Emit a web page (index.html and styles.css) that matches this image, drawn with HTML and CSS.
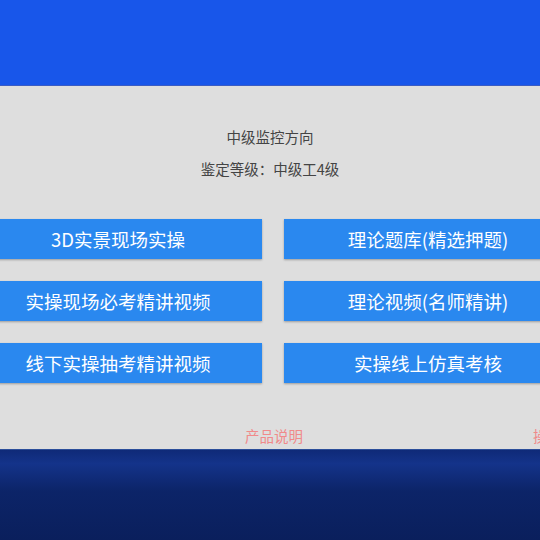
FILE: index.html
```html
<!DOCTYPE html>
<html lang="zh-CN">
<head>
<meta charset="utf-8">
<link rel="stylesheet" href="styles.css">
</head>
<body>
<div class="page">
  <div class="header"></div>
  <div class="main">
    <div class="title">中级监控方向</div>
    <div class="subtitle">鉴定等级：中级工4级</div>
    <div class="grid">
      <div class="btn">3D实景现场实操</div>
      <div class="btn">理论题库(精选押题)</div>
      <div class="btn">实操现场必考精讲视频</div>
      <div class="btn">理论视频(名师精讲)</div>
      <div class="btn">线下实操抽考精讲视频</div>
      <div class="btn">实操线上仿真考核</div>
    </div>
    <div class="links">
      <span class="link">产品说明</span>
      <span class="link">操作说明</span>
    </div>
  </div>
  <div class="bottom"></div>
</div>
</body>
</html>
```

FILE: styles.css
```css
html, body {
  margin: 0;
  padding: 0;
}
body {
  width: 540px;
  height: 540px;
  overflow: hidden;
  font-family: "Noto Sans CJK SC", "Noto Sans", sans-serif;
  background: #dedede;
}
.page {
  width: 540px;
  overflow: hidden;
}
.header {
  height: 85px;
  background: #1856ea;
  border-bottom: 1px solid #3a5cc4;
}
.main {
  height: 363px;
  background: #dedede;
  padding-top: 41px;
  box-sizing: border-box;
  display: flex;
  flex-direction: column;
  align-items: stretch;
}
.title, .subtitle {
  text-align: center;
  font-size: 14.5px;
  line-height: 20px;
  color: #444;
}
.subtitle {
  margin-top: 12px;
}
.grid {
  margin-top: 40px;
  margin-left: -26px;
  display: grid;
  grid-template-columns: 288px 288px;
  grid-auto-rows: 40px;
  column-gap: 22px;
  row-gap: 22px;
  width: 598px;
}
.btn {
  background: #2a88ef;
  color: #fff;
  font-size: 18.5px;
  display: flex;
  align-items: center;
  justify-content: center;
  box-shadow: 0 1px 2px rgba(0, 0, 0, 0.3);
}
.links {
  margin-top: 43px;
  padding-left: 245px;
  display: flex;
  gap: 230px;
  white-space: nowrap;
}
.link {
  font-size: 14.5px;
  line-height: 20px;
  color: #f08a8a;
  flex: none;
}
.bottom {
  height: 91px;
  border-top: 1px solid #2b4e9a;
  background: linear-gradient(to bottom, #0f2a78 0%, #14338a 15%, #0c2468 45%, #0a1f5c 100%);
}
```
